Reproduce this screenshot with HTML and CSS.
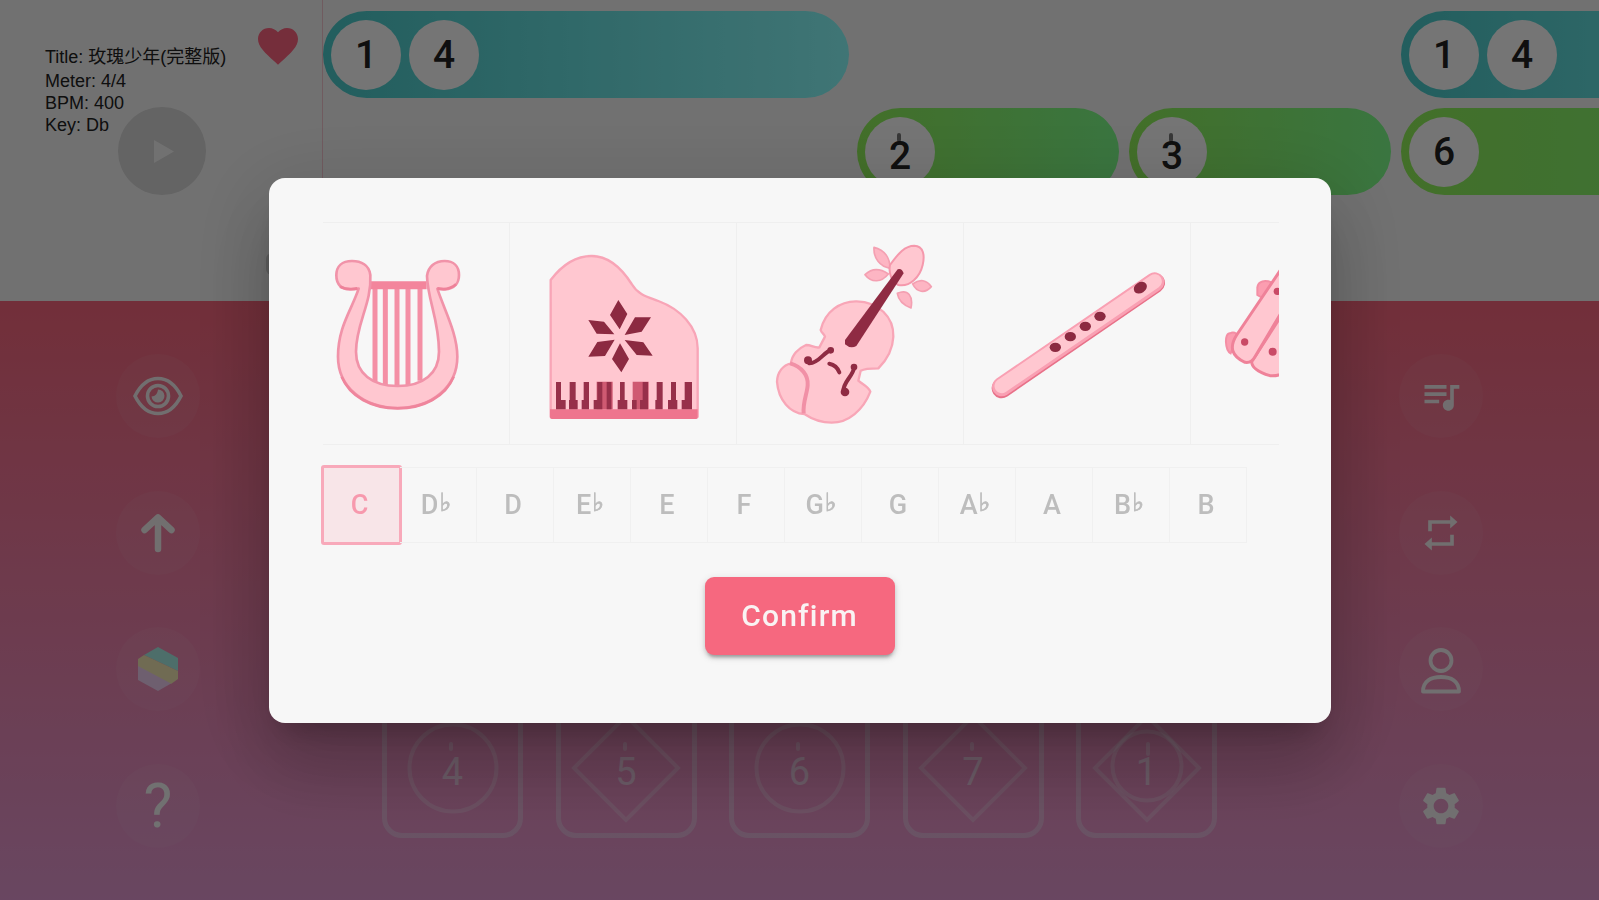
FILE: index.html
```html
<!DOCTYPE html>
<html lang="en">
<head>
  <meta charset="UTF-8">
  <title>Music Pad</title>
  <link rel="stylesheet" href="styles.css">
</head>
<body>
  <!-- score -->
  <div class="score">
    <div class="info">
      <div class="song">
        <div>Title: 玫瑰少年(完整版)</div>
        <div>Meter: 4/4</div>
        <div>BPM: 400</div>
        <div>Key: Db</div>
      </div>
      <svg class="heart" viewBox="0 0 24 24"><path d="M12 21.35l-1.45-1.32C5.4 15.36 2 12.28 2 8.5 2 5.42 4.42 3 7.5 3c1.74 0 3.41.81 4.5 2.09C13.09 3.81 14.76 3 16.5 3 19.58 3 22 5.42 22 8.5c0 3.78-3.4 6.86-8.55 11.54L12 21.35z"/></svg>
      <button class="play"><svg viewBox="0 0 20 23"><path d="M0 0L20 11.5L0 23Z"/></svg></button>
      <div class="handle"></div>
    </div>
    <div class="lanes">
      <div class="lane">
        <div class="bar teal long"><span class="note">1</span><span class="note">4</span></div>
        <div class="bar teal long next"><span class="note">1</span><span class="note">4</span></div>
      </div>
      <div class="lane second">
        <div class="bar green"><span class="note high">2</span></div>
        <div class="bar green"><span class="note high">3</span></div>
        <div class="bar green long"><span class="note">6</span></div>
      </div>
    </div>
  </div>

  <!-- keyboard -->
  <div class="board">
    <div class="menu">
      <button class="round">
        <svg width="50" height="42" viewBox="0 0 50 42" fill="none" stroke="#f7f7f7" stroke-width="3.6"><path d="M2 21C7 11 15 3.500 25 3.500S43 11 48 21C43 31 35 38.500 25 38.500S7 31 2 21Z"/><circle cx="25" cy="21" r="10.500"/><path d="M25 14.500a6.500 6.500 0 1 1-6.500 7c4 0 6-3 6.500-7z" fill="#f7f7f7" stroke="none"/></svg>
      </button>
      <button class="round">
        <svg width="36" height="40" viewBox="0 0 36 40" fill="none" stroke="#f7f7f7" stroke-width="6.500" stroke-linecap="round" stroke-linejoin="round"><path d="M18 36V5M4.500 17L18 4.500L31.500 17"/></svg>
      </button>
      <button class="round">
        <svg width="40" height="44" viewBox="0 0 40 44"><path d="M20 0L40 11V24L6 8Z" fill="#a5f5ea"/><path d="M6 8L40 24V32L33 37L0 20V12Z" fill="#f5eeb5"/><path d="M0 19L33 36.500L20 44L0 33Z" fill="#f0d4f5"/></svg>
      </button>
      <button class="round help">?</button>
    </div>

    <div class="pads">
      <div class="pad">
        <svg viewBox="0 0 110 110"><circle cx="55" cy="55" r="43.500"/></svg>
        <span class="high">4</span>
      </div>
      <div class="pad">
        <svg viewBox="0 0 110 110"><path d="M55 3L107 55L55 107L3 55Z"/></svg>
        <span class="high">5</span>
      </div>
      <div class="pad">
        <svg viewBox="0 0 110 110"><circle cx="55" cy="55" r="43.500"/></svg>
        <span class="high">6</span>
      </div>
      <div class="pad">
        <svg viewBox="0 0 110 110"><path d="M55 3L107 55L55 107L3 55Z"/></svg>
        <span class="high">7</span>
      </div>
      <div class="pad">
        <svg viewBox="0 0 110 110"><path d="M55 3L107 55L55 107L3 55Z"/><circle cx="55" cy="53" r="34.500"/></svg>
        <span class="high top">1</span>
      </div>
    </div>

    <div class="menu right">
      <button class="round"><svg width="44" height="44" viewBox="0 0 24 24" fill="#f7f7f7"><path d="M15 6H3v2h12V6zm0 4H3v2h12v-2zM3 16h8v-2H3v2zM17 6v8.180c-.31-.11-.65-.18-1-.18-1.660 0-3 1.340-3 3s1.340 3 3 3 3-1.340 3-3V8h3V6h-5z"/></svg></button>
      <button class="round"><svg width="44" height="44" viewBox="0 0 24 24" fill="#f7f7f7"><path d="M7 7h10v2.500L21 6l-4-3.500V5H5v6h2V7zm10 10H7v-2.500L3 18l4 3.500V19h12v-6h-2v4z"/></svg></button>
      <button class="round person"><svg width="42" height="46" viewBox="0 0 42 46" fill="none" stroke="#f7f7f7" stroke-width="3.800"><circle cx="21" cy="12.500" r="10.500"/><path d="M3 43.500C3 33 11 29 21 29S39 33 39 43.500Z" stroke-linejoin="round"/></svg></button>
      <button class="round"><svg width="44" height="44" viewBox="0 0 24 24" fill="#f7f7f7"><path d="M19.430 12.980c.04-.32.070-.64.070-.98s-.03-.66-.07-.98l2.110-1.650c.19-.15.240-.42.120-.64l-2-3.460c-.12-.22-.39-.3-.61-.22l-2.490 1c-.52-.4-1.080-.73-1.690-.98l-.38-2.650C14.460 2.180 14.250 2 14 2h-4c-.25 0-.46.180-.49.420l-.38 2.650c-.61.250-1.170.590-1.690.980l-2.490-1c-.23-.09-.49 0-.61.220l-2 3.460c-.13.220-.07.490.120.640l2.110 1.650c-.04.320-.07.650-.07.980s.03.660.070.980l-2.110 1.650c-.19.150-.24.420-.12.640l2 3.460c.12.220.39.300.61.220l2.490-1c.52.400 1.080.730 1.690.980l.38 2.650c.03.240.24.420.49.420h4c.25 0 .46-.18.490-.42l.38-2.650c.61-.25 1.170-.59 1.690-.98l2.490 1c.23.090.49 0 .61-.22l2-3.460c.12-.22.070-.49-.12-.64l-2.110-1.650zM12 16c-2.200 0-4-1.800-4-4s1.800-4 4-4 4 1.800 4 4-1.800 4-4 4z"/></svg></button>
    </div>
  </div>

  <!-- instrument dialog -->
  <div class="overlay">
    <div class="dialog">
      <div class="instruments">
        <!-- lyre -->
        <div class="instrument">
          <svg viewBox="-81 39 678 663">
            <g stroke="#f48fa5" stroke-width="15"><path d="M195 225V515M226 225V528M261 225V532M294 225V528M330 225V512"/></g>
            <path d="M180 226H350" stroke="#f3859c" stroke-width="24"/>
            <path d="M181 195C178 165 153 153 126 153C97 153 79 168 79 196C79 224 95 239 122 238L146 236C125 300 84 350 84 440C84 530 160 594 263 594C366 594 442 530 442 440C442 370 403 300 382 236L405 238C432 237 447 220 447 195C447 168 430 153 404 153C375 153 354 170 351 198C353 270 387 330 387 425C387 490 340 528 263 528C186 528 138 490 138 425C138 340 186 280 181 195Z" fill="#ffc7d0" stroke="#f193a9" stroke-width="8" stroke-linejoin="round"/>
            <path d="M95 500C120 560 185 595 263 595S406 560 431 500" fill="none" stroke="#ef859c" stroke-width="8"/>
            <path d="M90 230Q115 241 142 235M382 235Q415 243 438 223" fill="none" stroke="#ee8199" stroke-width="8"/>
          </svg>
        </div>
        <!-- piano -->
        <div class="instrument">
          <svg viewBox="600 39 678 663">
            <path d="M722 210C760 160 800 138 845 138C895 138 935 175 965 222C985 255 1010 260 1045 273C1110 297 1163 350 1163 415V620H722Z" fill="#ffc7d0" stroke="#f8a5b7" stroke-width="7" stroke-linejoin="round"/>
            <path d="M720 598H1163V624Q1163 627 1158 627H725Q720 627 720 622Z" fill="#ee758e"/>
            <g fill="#8c2a41"><path d="M925 270L952 312L929 358L900 315ZM975 322H1023L995 365L944 375ZM944 390L1000 397L1028 437L980 435ZM930 400L957 447L934 487L906 447ZM835 440L862 396L914 389L885 438ZM835 330L882 335L913 373L860 371Z"/></g>
            <path d="M860 515H908V598H860ZM968 515H1016V598H968Z" fill="#cf5a72"/>
            <g fill="#97304a">
              <path d="M738 516h15v54h14v28h-29zM779 516h18v54h6v28h-26v-28h2zM821 516h16v82h-22v-28h6zM862 516h15v82h-26v-28h11zM890 516h14v82h-14zM930 516h14v54h8v28h-29v-28h7zM966 570h14v28h-14zM998 516h16v82h-24v-28h8zM1040 516h18v82h-22v-28h4zM1083 516h15v54h4v28h-28v-28h9zM1124 516h22v82h-31v-28h9z"/>
            </g>
          </svg>
        </div>
        <!-- violin -->
        <div class="instrument">
          <svg viewBox="51 39 678 663">
            <g fill="#fdb5c3" stroke="#f4a0b2" stroke-width="5" stroke-linejoin="round">
              <path d="M462 112C495 120 510 145 510 175C480 170 460 145 462 112ZM435 194C455 175 480 175 505 192C485 217 455 220 435 194ZM578 222C600 205 620 210 634 230C615 252 590 247 578 222ZM532 250C565 235 580 260 573 294C550 285 535 270 532 250Z"/>
            </g>
            <path d="M510 165C535 130 555 107 583 107C610 108 615 135 608 165C600 200 570 232 535 225C515 215 505 190 510 165Z" fill="#ffc7d0" stroke="#f598ac" stroke-width="6"/>
            <path d="M302 360C315 305 360 273 410 274C475 276 522 320 520 380C518 425 495 455 475 475C455 475 435 475 422 482L415 512C430 525 445 530 451 545C430 600 385 638 335 638C305 638 280 630 253 612C210 610 175 570 171 515C172 485 190 465 213 460C215 435 235 415 258 405C275 405 285 415 298 412L315 380C312 370 305 370 302 360Z" fill="#ffc7d0" stroke="#f8a6b7" stroke-width="7" stroke-linejoin="round"/>
            <path d="M210 460C245 470 265 495 263 525C262 550 248 575 251 610" fill="none" stroke="#f190a6" stroke-width="12"/>
            <path d="M533 178Q545 173 551 190L409 408Q392 418 375 403V390Z" fill="#8f2b43"/>
            <g fill="none" stroke="#8f2b43" stroke-width="12" stroke-linecap="round"><path d="M335 420C310 425 300 458 268 460M403 470C400 500 368 515 370 545M328 461Q350 465 358 487"/></g>
            <g fill="#8f2b43"><circle cx="264" cy="451" r="12"/><circle cx="332" cy="421" r="10"/><circle cx="375" cy="546" r="13"/><circle cx="402" cy="471" r="10"/></g>
          </svg>
        </div>
        <!-- flute -->
        <div class="instrument">
          <svg viewBox="-18 39 678 663">
            <path d="M95 535L555 219" stroke="#e87189" stroke-width="60" stroke-linecap="round"/>
            <path d="M95 530L554 216" stroke="#f9a0b3" stroke-width="58" stroke-linecap="round"/>
            <path d="M95 528L554 214" stroke="#ffc7d0" stroke-width="43" stroke-linecap="round"/>
            <g fill="#8c2a41"><ellipse cx="511" cy="233" rx="21" ry="16" transform="rotate(-32 511 233)"/><ellipse cx="390" cy="319" rx="17" ry="14"/><ellipse cx="346" cy="349" rx="17" ry="14"/><ellipse cx="301" cy="380" rx="17" ry="14"/><ellipse cx="256" cy="412" rx="17" ry="14"/></g>
          </svg>
        </div>
        <!-- xylophone -->
        <div class="instrument">
          <svg viewBox="663 39 678 663">
            <g fill="#fb9db0" stroke="#f48fa5" stroke-width="6"><path d="M862 255V232C865 212 885 210 905 217L880 265ZM782 430C765 420 762 370 780 370C790 364 800 370 802 375Z"/></g>
            <g fill="#ffc7d0" stroke="#ef8299" stroke-width="9" stroke-linejoin="round"><path d="M945 300L845 455Q845 480 900 497Q930 500 950 480Z"/><path d="M945 160L800 375Q765 430 825 457Q845 460 855 440L980 230Z"/></g>
            <g fill="#c94a66"><circle cx="824" cy="396" r="11"/><circle cx="908" cy="425" r="12"/><circle cx="922" cy="244" r="11"/></g>
          </svg>
        </div>
      </div>

      <div class="keys">
        <div class="key selected">C</div>
        <div class="key">D<i>♭</i></div>
        <div class="key">D</div>
        <div class="key">E<i>♭</i></div>
        <div class="key">E</div>
        <div class="key">F</div>
        <div class="key">G<i>♭</i></div>
        <div class="key">G</div>
        <div class="key">A<i>♭</i></div>
        <div class="key">A</div>
        <div class="key">B<i>♭</i></div>
        <div class="key">B</div>
      </div>

      <button class="confirm">Confirm</button>
    </div>
  </div>
</body>
</html>
```
FILE: styles.css
```css
* {
  box-sizing: border-box;
}

body {
  margin: 0;
  height: 100vh;
  overflow: hidden;
  display: flex;
  flex-direction: column;
  background-color: #f7f7f7;
  font-family: Roboto, "Noto Sans CJK SC", sans-serif;
}

button {
  border: none;
  padding: 0;
  font-family: inherit;
  cursor: pointer;
}

/* score */
.score {
  height: 301px;
  display: flex;
}

.info {
  position: relative;
  width: 323px;
  flex-shrink: 0;
  padding: 22px 20px 0 45px;
  display: flex;
  justify-content: space-between;
  border-right: 1px solid #f5c6d0;
}

.song {
  padding-top: 22px;
  font-family: "Liberation Sans", "Noto Sans CJK SC", sans-serif;
  font-size: 18px;
  line-height: 22px;
  color: #222;
  white-space: nowrap;
}

.song div:first-child {
  line-height: 26px;
}

.heart {
  width: 48px;
  height: 48px;
  flex-shrink: 0;
  fill: #ff6480;
}

.play {
  position: absolute;
  left: 118px;
  top: 107px;
  width: 88px;
  height: 88px;
  border-radius: 50%;
  background-color: #d9d9d9;
  display: flex;
  align-items: center;
  justify-content: center;
}

.play svg {
  width: 20px;
  height: 23px;
  margin-left: 4px;
  fill: #f7f7f7;
}

.handle {
  position: absolute;
  left: 266px;
  top: 253px;
  width: 22px;
  height: 22px;
  border-radius: 6px;
  background-color: #d0d0d0;
}

.lanes {
  flex: 1;
  overflow: hidden;
  padding-top: 11px;
}

.lane {
  display: flex;
  gap: 10px;
  margin-bottom: 10px;
}

.lane.second {
  padding-left: 534px;
}

.bar {
  width: 262px;
  height: 87px;
  flex-shrink: 0;
  border-radius: 44px;
  padding: 0 8px;
  display: flex;
  align-items: center;
  gap: 8px;
}

.bar.long {
  width: 526px;
}

.bar.next {
  margin-left: 542px;
}

.teal {
  background: linear-gradient(to right, #4bcccc, #8bffff);
}

.green {
  background: linear-gradient(to right, #92f25a, #7eff8c);
}

.note {
  width: 70px;
  height: 70px;
  border-radius: 50%;
  background-color: #fff;
  color: #222;
  font-size: 39px;
  font-weight: 500;
  display: flex;
  align-items: center;
  justify-content: center;
}

/* octave dot above the number */
.high {
  position: relative;
  padding-top: 8px;
}

.high::before {
  content: "";
  position: absolute;
  left: 50%;
  top: 16px;
  width: 4px;
  height: 9px;
  margin-left: -3px;
  border-radius: 2px;
  background-color: currentColor;
  opacity: 0.6;
}

/* keyboard */
.board {
  flex: 1;
  display: flex;
  justify-content: space-between;
  background: linear-gradient(#f9677e, #e49ad3);
}

.menu {
  width: 316px;
  padding-top: 53px;
  display: flex;
  flex-direction: column;
  align-items: center;
  gap: 52.5px;
}

.round {
  width: 84px;
  height: 84px;
  border-radius: 50%;
  background-color: rgba(255, 255, 255, 0.06);
  display: flex;
  align-items: center;
  justify-content: center;
}

.round svg {
  opacity: 0.95;
}

.person svg {
  margin-top: 3px;
}

.help {
  color: #f7f7f7;
  font-size: 61px;
}

.pads {
  display: flex;
  align-items: flex-end;
  gap: 32.5px;
  padding-bottom: 62px;
}

.pad {
  width: 141px;
  height: 141px;
  border: 5px solid rgba(230, 255, 255, 0.3);
  border-radius: 20px;
  display: grid;
  place-items: center;
  color: rgba(235, 255, 255, 0.5);
  font-size: 38px;
}

.pad > * {
  grid-area: 1 / 1;
}

.pad svg {
  width: 110px;
  height: 110px;
  fill: none;
  stroke: rgba(240, 255, 255, 0.24);
  stroke-width: 4;
}

.pad .high::before {
  top: 0;
  height: 9px;
}

.pad .top::before {
  height: 14px;
  margin-left: 0;
}

/* dialog */
.overlay {
  position: fixed;
  inset: 0;
  display: flex;
  align-items: center;
  justify-content: center;
  background-color: rgba(0, 0, 0, 0.54);
}

.dialog {
  width: 1062px;
  height: 545px;
  padding: 44px 52px 0 54px;
  display: flex;
  flex-direction: column;
  border-radius: 16px;
  background-color: #f7f7f7;
  box-shadow: 0 20px 28px -13px rgba(0, 0, 0, 0.2),
    0 44px 70px 6px rgba(0, 0, 0, 0.14),
    0 17px 84px 15px rgba(0, 0, 0, 0.12);
}

.instruments {
  height: 223px;
  display: flex;
  overflow: hidden;
  border-top: 1px solid #efefef;
  border-bottom: 1px solid #efefef;
}

.instrument {
  width: 227px;
  flex-shrink: 0;
  border-right: 1px solid #efefef;
}

.instrument:first-child {
  margin-left: -40px;
}

.instrument svg {
  display: block;
  width: 226px;
  height: 221px;
}

.keys {
  display: flex;
  margin-top: 22px;
}

.key {
  width: 77px;
  height: 76px;
  padding-right: 3px;
  display: flex;
  align-items: center;
  justify-content: center;
  border: 1px solid #f0f0f0;
  border-left: none;
  color: #bdbdbd;
  font-size: 27px;
  font-weight: 500;
}

.key i {
  margin: -5px 0 0 1px;
  font-family: "DejaVu Sans", sans-serif;
  font-style: normal;
  font-weight: bold;
  font-size: 25px;
  -webkit-text-stroke: 0.8px #bdbdbd;
}

.key.selected {
  border: none;
  outline: 3px solid #f8a9ba;
  outline-offset: -1px;
  border-radius: 1px;
  background-color: #f8e5e8;
  color: #f799ad;
}

.confirm {
  width: 190px;
  height: 78px;
  margin: 34px 0 0 382px;
  border-radius: 9px;
  background-color: #f6687f;
  color: #f9f3f3;
  font-size: 30px;
  font-weight: 500;
  letter-spacing: 1.2px;
  box-shadow: 0 5px 3px -3px rgba(0, 0, 0, 0.2),
    0 3px 4px rgba(0, 0, 0, 0.14),
    0 2px 8px rgba(0, 0, 0, 0.12);
}
```
